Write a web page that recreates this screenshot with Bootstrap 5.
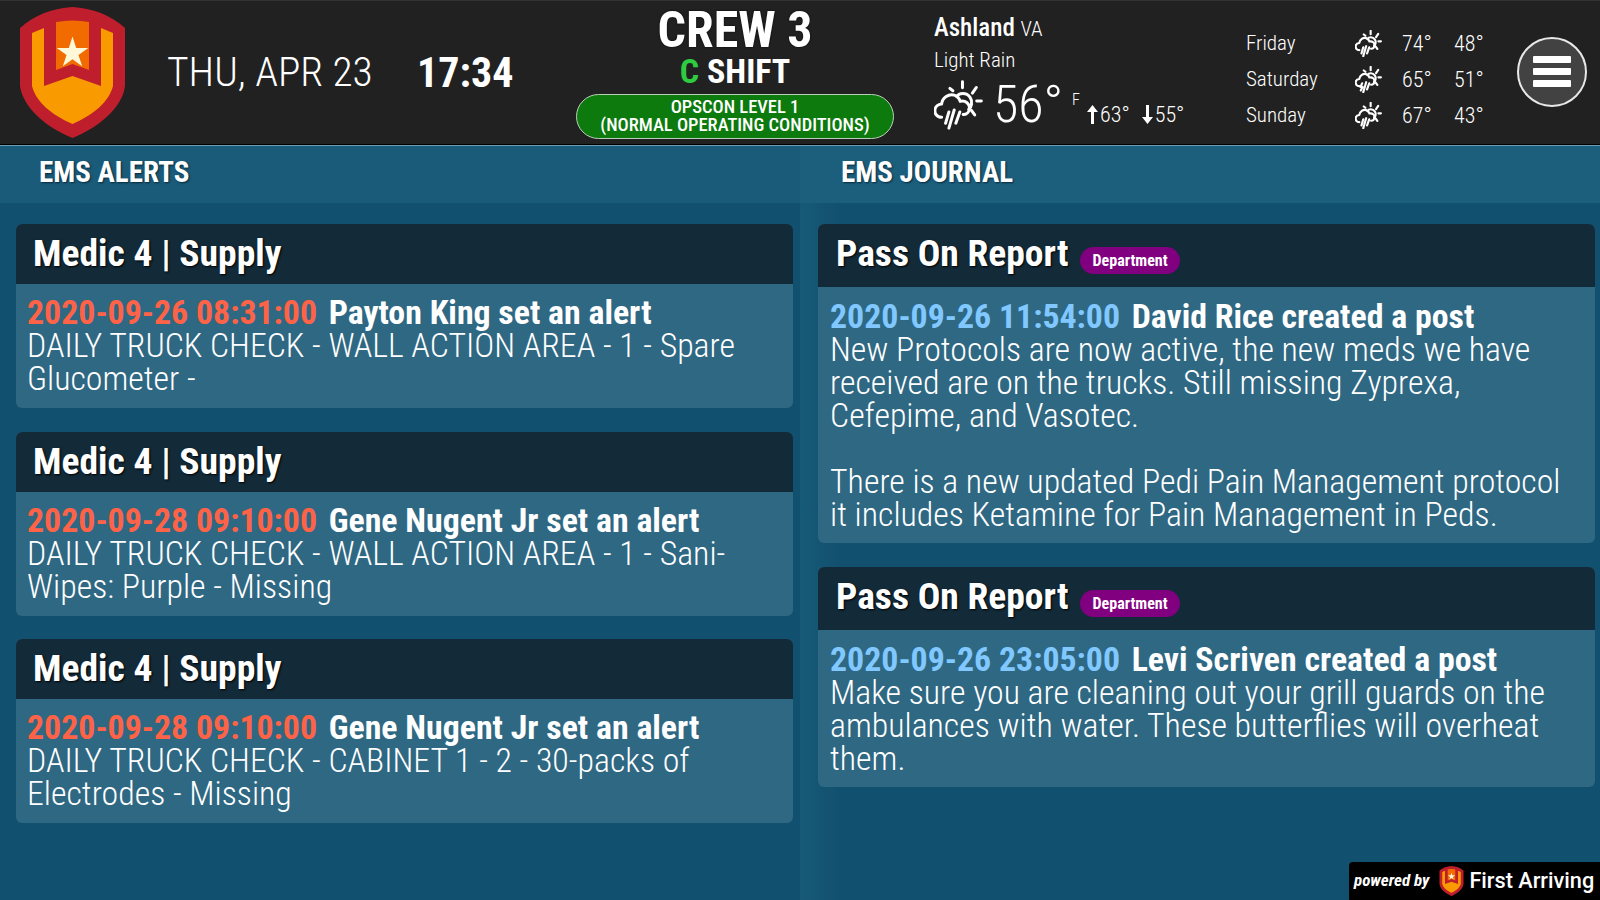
<!DOCTYPE html>
<html lang="en"><head><meta charset="utf-8"><title>EMS Board</title>
<link href="https://cdn.jsdelivr.net/npm/bootstrap@5.3.0/dist/css/bootstrap.min.css" rel="stylesheet">
<style>
html,body{height:100%;overflow:hidden}
body{background:#12506f;color:#fff;font-family:Roboto,"Liberation Sans",sans-serif;font-stretch:75%}
.shell{height:900px;width:1600px;position:relative}
.topbar{height:145px;background:#212121;border-top:1px solid #333;border-bottom:1px solid #000}
.rule{height:1px;background:#6f9db5}
.logo-wrap{width:167px;padding-left:20px}
.datetxt{font-weight:300;font-size:41.5px;width:250px;white-space:nowrap}
.timetxt{font-weight:700;font-size:42px;width:159px;white-space:nowrap}
.crew{width:318px;text-align:center;line-height:1}
.crew-a{font-size:50px;font-weight:700;line-height:43px;margin-top:8px;text-shadow:0 0 2px #000}
.crew-b{font-size:34px;font-weight:700;line-height:39px}
.crew-c{color:#2ecc40}
.opscon{background:#0c7a0c;border:1px solid #b9cfb9;border-radius:23px;font-weight:500;font-size:18.5px;line-height:18px;height:45px;padding-top:3px;margin-top:2.500px}
.wx{width:268px;margin-left:40px;font-weight:300}
.wx-city{font-size:25px;line-height:30px;margin-top:12px}
.wx-city b{font-weight:500}
.wx-st{font-size:21px}
.wx-cond{font-size:21px;line-height:30px;margin-top:1px}
.wx-now{height:56px;margin-top:2px}
.wx-temp{font-size:52px;line-height:56px;margin-left:10px;width:79px}
.wx-f{font-size:16px;align-self:flex-start;margin-top:11px;width:14px}
.wx-hl{font-size:22px;line-height:26px;align-self:flex-end;margin-bottom:5px;white-space:nowrap}
.wx-hl svg{vertical-align:-3px;margin-right:1px}
.wx-hl .dn{margin-left:11px}
.fc{width:269px;margin-left:44px;margin-top:14px;font-weight:300;font-size:21px}
.fc-row{height:36px}
.fc-day{width:109px}
.fc-hi{width:52px;margin-left:20px;font-size:22px}
.fc-lo{font-size:22px}
.ic-l{stroke-width:9}
.ic-s{stroke-width:12}
.menu-btn{width:70px;height:70px;border:2px solid #e8e8e8;border-radius:50%;background:#424242;margin-left:2px;margin-top:-2px;gap:5px;padding:0}
.menu-btn i{display:block;width:38px;height:7px;background:#fff;border-radius:1px}
.sec-head{height:57px;background:#1a5b79;font-size:29px;font-weight:700;padding-left:39px;padding-top:9px;line-height:34px;text-shadow:1px 1px 2px #06283a}
.col-b .sec-head{padding-left:41px;background:#1c5f7d}
.col-b{background:linear-gradient(90deg,#175a78 0,#12506f 40px)}
.stack{padding:21px 7px 0 16px;height:697px}
.col-b .stack{padding:21px 5px 0 18px}
.notice{border:0;border-radius:6px;background:#2f6883;margin-bottom:23.5px;overflow:hidden;color:#fff}
.notice .card-header{background:#132a38;border:0;border-radius:0;padding:0 17px;height:60px;font-size:37.6px;font-weight:700;line-height:59px;text-shadow:1px 1px 2px #000}
.col-b .notice .card-header{height:63px;padding-left:18px}
.notice .card-body{padding:12px 11px 13px;font-size:33.85px;line-height:33px;font-weight:300}
.col-b .notice .card-body{padding-left:12px;padding-top:13px;padding-bottom:12px}
.stamp{font-weight:700;margin-right:4px}
.stamp-red{color:#ff6347}
.stamp-blue{color:#80c8ff}
.who{font-weight:700}
.tag{background:#800080;font-size:16px;font-weight:700;border-radius:14px;width:100px;height:27px;padding:6px 0 0;text-align:center;vertical-align:0;margin-left:3px;line-height:15px;text-shadow:none}
.brand{position:absolute;right:0;bottom:0;width:251px;height:38px;background:#000;border-top-left-radius:4px;padding-left:5px;gap:10px}
.brand-by{font-size:17px;font-weight:700;font-style:italic;white-space:nowrap}
.brand-name{font-size:21.7px;font-weight:500;font-stretch:100%;white-space:nowrap;margin-left:-5px}
</style></head><body>
<svg width="0" height="0" class="position-absolute"><defs>
<symbol id="wxi" viewBox="27 10 148 150"><g fill="none" stroke="#fff" stroke-linecap="round" stroke-linejoin="round"><path d="M50 122C35 122 28 110 30 98C32 88 42 82 50 82C52 62 72 50 88 55C98 58 104 66 106 74C122 70 136 82 134 96C133 108 124 114 115 114"/><path d="M96 60C102 48 125 46 136 62C145 75 140 92 132 98"/><path d="M113 15V33M155 32L143 49M170 73H156M150 115L140 101M75 35L84 42"/><path d="M72 106L62 140M88 100L72 155M105 106L93 140"/></g></symbol>
<symbol id="wxb" viewBox="27 10 148 150"><g fill="none" stroke="#fff" stroke-linecap="round" stroke-linejoin="round"><path d="M50 122C35 122 28 110 30 98C32 88 42 82 50 82C52 62 72 50 88 55C98 58 104 66 106 74C122 70 136 82 134 96C133 108 124 114 115 114"/><path d="M96 60C102 48 125 46 136 62C145 75 140 92 132 98"/><path d="M113 15V33M155 32L143 49M170 73H156M150 115L140 101M75 35L84 42"/><path d="M66 106L56 126H68L58 146M88 100L72 155M105 106L93 140"/></g></symbol>
<symbol id="shield" viewBox="0 0 105 131"><path fill="#bf1e2d" d="M52.500 0C33 1 14 8 0 21v58c3 22 27 42 52.500 52 25-10 50-30 52.500-52V21C91 8 72 1 52.500 0z"/><path fill="#f99a00" d="M12 26l12-5v58l28.500-10L81 79V21l12 5v53c-4 16-20 29-40.500 38C32 108 16 95 12 79z"/><path fill="#f26b00" d="M36 15c11-2 22-2 33 0v48l-16.500-6L36 63z"/><path fill="#fff8d8" d="M52.500 29.500l3.700 11.400h12l-9.700 7 3.700 11.400-9.700-7-9.700 7 3.700-11.400-9.700-7h12z"/></symbol>
</defs></svg>
<div class="shell">
<header class="topbar d-flex align-items-center">
<div class="logo-wrap"><svg width="105" height="131"><use href="#shield"/></svg></div>
<div class="datetxt">THU, APR 23</div><div class="timetxt">17:34</div>
<div class="crew align-self-start"><div class="crew-a">CREW 3</div><div class="crew-b"><span class="crew-c">C</span> SHIFT</div><div class="opscon">OPSCON LEVEL 1<br>(NORMAL OPERATING CONDITIONS)</div></div>
<div class="wx align-self-start">
<div class="wx-city"><b>Ashland</b> <span class="wx-st">VA</span></div>
<div class="wx-cond">Light Rain</div>
<div class="wx-now d-flex align-items-center"><svg class="ic-l" width="49" height="50"><use href="#wxi"/></svg><div class="wx-temp">56°</div><div class="wx-f">F</div>
<div class="wx-hl"><svg width="13" height="21" viewBox="0 0 13 21"><path d="M6.500 1L1 8h4v12h3V8h4z" fill="#fff"/></svg>63°<svg class="dn" width="13" height="21" viewBox="0 0 13 21"><path d="M6.500 20L12 13H8V1H5v12H1z" fill="#fff"/></svg>55°</div></div>
</div>
<div class="fc">
<div class="fc-row d-flex align-items-center"><div class="fc-day">Friday</div><svg class="ic-s" width="27" height="27"><use href="#wxi"/></svg><div class="fc-hi">74°</div><div class="fc-lo">48°</div></div>
<div class="fc-row d-flex align-items-center"><div class="fc-day">Saturday</div><svg class="ic-s" width="27" height="27"><use href="#wxb"/></svg><div class="fc-hi">65°</div><div class="fc-lo">51°</div></div>
<div class="fc-row d-flex align-items-center"><div class="fc-day">Sunday</div><svg class="ic-s" width="27" height="27"><use href="#wxi"/></svg><div class="fc-hi">67°</div><div class="fc-lo">43°</div></div>
</div>
<button class="menu-btn d-flex flex-column align-items-center justify-content-center flex-shrink-0" type="button" aria-label="Menu"><i></i><i></i><i></i></button>
</header>
<div class="rule"></div>
<main class="row g-0">
<section class="col-6">
<div class="sec-head">EMS ALERTS</div>
<div class="stack">
<div class="card notice"><div class="card-header">Medic 4 | Supply</div><div class="card-body"><span class="stamp stamp-red">2020-09-26 08:31:00</span> <span class="who">Payton King set an alert</span><br>DAILY TRUCK CHECK - WALL ACTION AREA - 1 - Spare Glucometer -</div></div>
<div class="card notice"><div class="card-header">Medic 4 | Supply</div><div class="card-body"><span class="stamp stamp-red">2020-09-28 09:10:00</span> <span class="who">Gene Nugent Jr set an alert</span><br>DAILY TRUCK CHECK - WALL ACTION AREA - 1 - Sani-Wipes: Purple - Missing</div></div>
<div class="card notice"><div class="card-header">Medic 4 | Supply</div><div class="card-body"><span class="stamp stamp-red">2020-09-28 09:10:00</span> <span class="who">Gene Nugent Jr set an alert</span><br>DAILY TRUCK CHECK - CABINET 1 - 2 - 30-packs of Electrodes - Missing</div></div>
</div>
</section>
<section class="col-6 col-b">
<div class="sec-head">EMS JOURNAL</div>
<div class="stack">
<div class="card notice"><div class="card-header">Pass On Report <span class="badge tag">Department</span></div><div class="card-body"><span class="stamp stamp-blue">2020-09-26 11:54:00</span> <span class="who">David Rice created a post</span><br>New Protocols are now active, the new meds we have received are on the trucks. Still missing Zyprexa, Cefepime, and Vasotec.<br><br>There is a new updated Pedi Pain Management protocol it includes Ketamine for Pain Management in Peds.</div></div>
<div class="card notice"><div class="card-header">Pass On Report <span class="badge tag">Department</span></div><div class="card-body"><span class="stamp stamp-blue">2020-09-26 23:05:00</span> <span class="who">Levi Scriven created a post</span><br>Make sure you are cleaning out your grill guards on the ambulances with water. These butterflies will overheat them.</div></div>
</div>
</section>
</main>
<footer class="brand d-flex align-items-center"><span class="brand-by">powered by</span><svg width="25" height="30"><use href="#shield"/></svg><span class="brand-name">First Arriving</span></footer>
</div></body></html>
